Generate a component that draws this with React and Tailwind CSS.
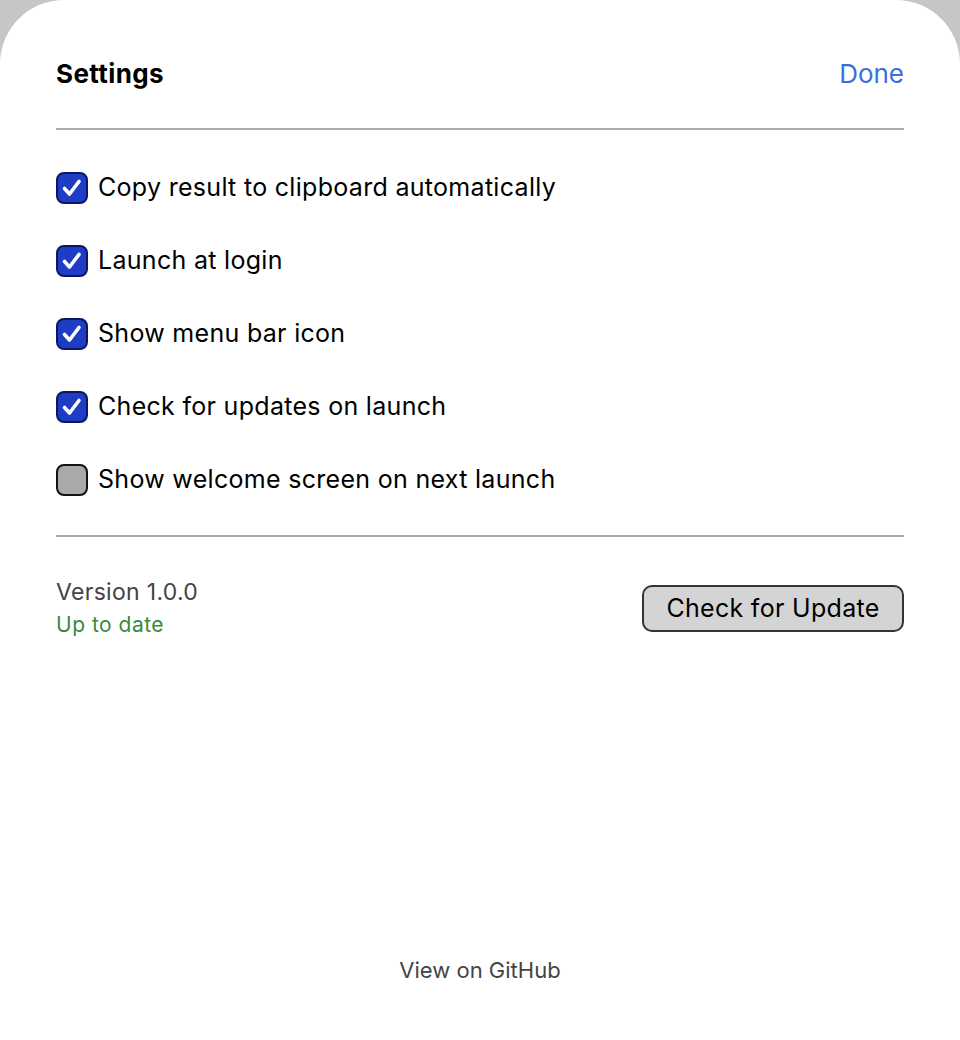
import React from "react";

function Checkbox({ checked }) {
  if (checked) {
    return (
      <div className="w-[32px] h-[32px] rounded-[8px] border-2 border-[#0b1765] bg-[#1f3dc4] flex items-center justify-center shrink-0">
        <svg width="24" height="24" viewBox="0 0 24 24" fill="none">
          <path d="M4.5 12.5 L9.5 18 L19 5.5" stroke="white" strokeWidth="3.6" strokeLinecap="round" strokeLinejoin="round" />
        </svg>
      </div>
    );
  }
  return <div className="w-[32px] h-[32px] rounded-[8px] border-2 border-[#111] bg-[#a9a9a9] shrink-0" />;
}

const items = [
  ["Copy result to clipboard automatically", true],
  ["Launch at login", true],
  ["Show menu bar icon", true],
  ["Check for updates on launch", true],
  ["Show welcome screen on next launch", false],
];

export default function App() {
  return (
    <div className="w-[960px] h-[1040px] bg-[#c6c6c6] overflow-hidden" style={{ fontFamily: "Inter, 'Noto Sans', sans-serif" }}>
      <div className="w-full h-full bg-white rounded-t-[64px] px-[56px] flex flex-col">
        <div className="h-[128px] flex items-center justify-between pt-[18px]">
          <div className="text-[26px] font-bold text-black tracking-[0.4px]">Settings</div>
          <div className="text-[26px] text-[#3b6fdc]">Done</div>
        </div>
        <div className="h-[2px] bg-[#ababab]" />
        <div className="flex flex-col pt-[21px]">
          {items.map(([label, checked]) => (
            <div key={label} className="h-[73px] flex items-center gap-[10px]">
              <Checkbox checked={checked} />
              <span className="text-[25px] tracking-[0.3px] text-black">{label}</span>
            </div>
          ))}
        </div>
        <div className="h-[2px] bg-[#ababab] mt-[19px]" />
        <div className="flex items-center justify-between pt-[39px]">
          <div className="flex flex-col">
            <span className="text-[23px] tracking-[0.3px] leading-[32px] text-[#444]">Version 1.0.0</span>
            <span className="text-[21px] tracking-[0.5px] leading-[33px] text-[#3a8a3d]">Up to date</span>
          </div>
          <button className="w-[262px] h-[47px] rounded-[10px] border-2 border-[#333] bg-[#d4d4d4] text-[25px] tracking-[0.3px] text-black">
            Check for Update
          </button>
        </div>
        <div className="flex-1" />
        <div className="text-center text-[22px] text-[#444] pb-[53px]">View on GitHub</div>
      </div>
    </div>
  );
}
